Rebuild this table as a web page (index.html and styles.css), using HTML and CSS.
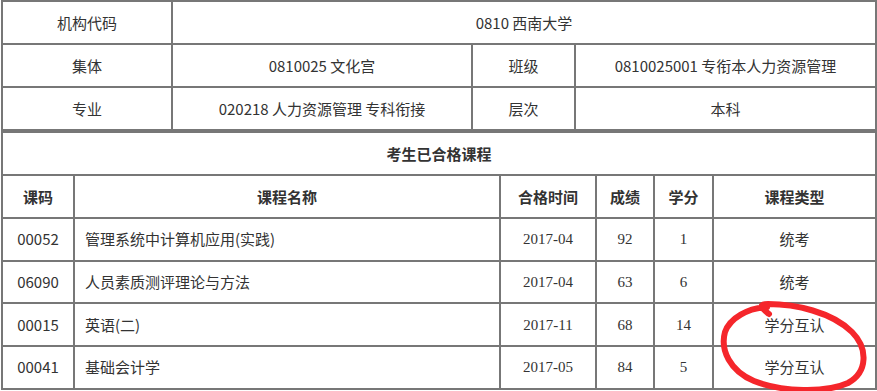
FILE: index.html
```html
<!DOCTYPE html>
<html lang="zh-CN">
<head>
<meta charset="utf-8">
<title>考生已合格课程</title>
<link rel="stylesheet" href="styles.css">
</head>
<body>
<div class="page">
  <table class="info">
    <colgroup>
      <col class="c1"><col class="c2"><col class="c3"><col class="c4">
    </colgroup>
    <tr>
      <td>机构代码</td>
      <td colspan="3">0810 西南大学</td>
    </tr>
    <tr>
      <td>集体</td>
      <td>0810025 文化宫</td>
      <td>班级</td>
      <td>0810025001 专衔本人力资源管理</td>
    </tr>
    <tr>
      <td>专业</td>
      <td>020218 人力资源管理 专科衔接</td>
      <td>层次</td>
      <td>本科</td>
    </tr>
  </table>
  <table class="courses">
    <colgroup>
      <col class="k1"><col class="k2"><col class="k3"><col class="k4"><col class="k5"><col class="k6">
    </colgroup>
    <tr>
      <th colspan="6" class="title">考生已合格课程</th>
    </tr>
    <tr>
      <th>课码</th>
      <th>课程名称</th>
      <th>合格时间</th>
      <th>成绩</th>
      <th>学分</th>
      <th>课程类型</th>
    </tr>
    <tr class="row">
      <td>00052</td>
      <td class="name">管理系统中计算机应用(实践)</td>
      <td class="num">2017-04</td>
      <td class="num">92</td>
      <td class="num">1</td>
      <td>统考</td>
    </tr>
    <tr class="row">
      <td>06090</td>
      <td class="name">人员素质测评理论与方法</td>
      <td class="num">2017-04</td>
      <td class="num">63</td>
      <td class="num">6</td>
      <td>统考</td>
    </tr>
    <tr class="row">
      <td>00015</td>
      <td class="name">英语(二)</td>
      <td class="num">2017-11</td>
      <td class="num">68</td>
      <td class="num">14</td>
      <td>学分互认</td>
    </tr>
    <tr class="row">
      <td>00041</td>
      <td class="name">基础会计学</td>
      <td class="num">2017-05</td>
      <td class="num">84</td>
      <td class="num">5</td>
      <td>学分互认</td>
    </tr>
  </table>
  <svg class="mark" width="877" height="391" viewBox="0 0 877 391" aria-hidden="true">
    <path d="M 769 314 C 764 310, 756 304, 768 304 C 795 304, 832 312, 852 332 C 868 348, 868 372, 848 383 C 826 393, 782 392, 754 381 C 730 371, 720 350, 725 332 C 730 318, 748 308, 767 307" fill="none" stroke="#f5262b" stroke-width="6" stroke-linecap="round" stroke-linejoin="round"/>
  </svg>
</div>
</body>
</html>
```

FILE: styles.css
```css
html, body {
  margin: 0;
  padding: 0;
  background: #ffffff;
}

.page {
  position: relative;
  width: 877px;
  height: 391px;
  overflow: hidden;
  padding-left: 1px;
  box-sizing: border-box;
}

table {
  table-layout: fixed;
  border-collapse: separate;
  border-spacing: 0;
  border: 1px solid #777777;
  width: 876px;
  font-family: "Noto Sans CJK SC", sans-serif;
  font-size: 15px;
  color: #333333;
}

td, th {
  border: 1px solid #777777;
  height: 41px;
  padding: 0;
  text-align: center;
  vertical-align: middle;
  line-height: 20px;
  white-space: nowrap;
}

th {
  font-weight: bold;
}

.courses .row td {
  height: 40.67px;
}

.info .c1 { width: 170px; }
.info .c2 { width: 300px; }
.info .c3 { width: 103px; }
.info .c4 { width: 301px; }

.courses .k1 { width: 72px; }
.courses .k2 { width: 426px; }
.courses .k3 { width: 96px; }
.courses .k4 { width: 58px; }
.courses .k5 { width: 59px; }
.courses .k6 { width: 163px; }

.courses .name {
  text-align: left;
  padding-left: 10px;
}

.courses .num {
  font-family: "Liberation Serif", "Noto Sans CJK SC", serif;
}

.mark {
  position: absolute;
  left: 0;
  top: 0;
  pointer-events: none;
}
```
